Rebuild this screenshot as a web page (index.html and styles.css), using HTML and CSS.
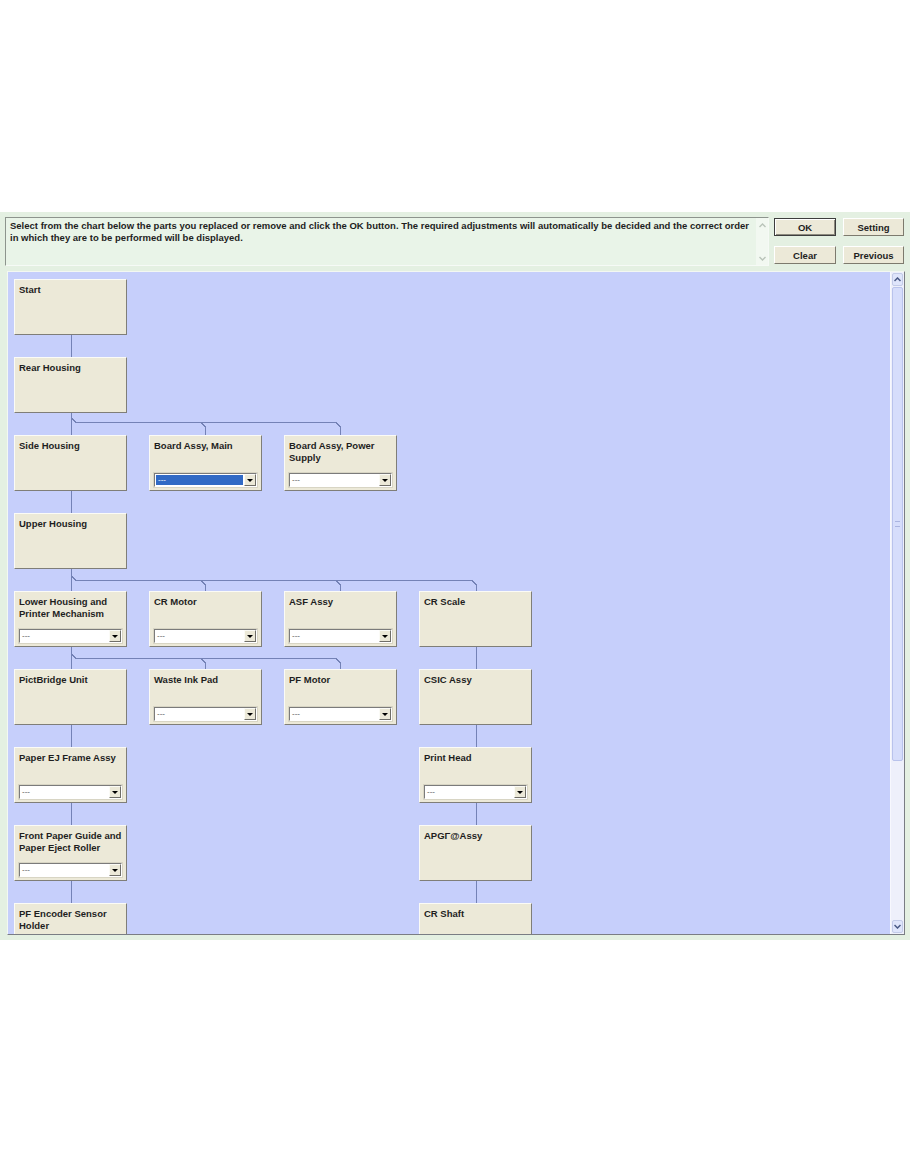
FILE: index.html
```html
<!DOCTYPE html>
<html>
<head>
<meta charset="utf-8">
<title>Adjustment order</title>
<link rel="stylesheet" href="styles.css">
</head>
<body>
<div class="app">
  <div class="toolbar">
    <div class="message">
      <p class="message-text">Select from the chart below the parts you replaced or remove and click the OK button. The required adjustments will automatically be decided and the correct order in which they are to be performed will be displayed.</p>
      <div class="msg-scroll">
        <span class="msg-arrow"><svg width="7" height="5" viewBox="0 0 7 5"><path d="M0.5 4 L3.5 1 L6.5 4" fill="none" stroke="#b9c4b9" stroke-width="1.4"/></svg></span>
        <span class="msg-arrow"><svg width="7" height="5" viewBox="0 0 7 5"><path d="M0.5 1 L3.5 4 L6.5 1" fill="none" stroke="#b9c4b9" stroke-width="1.4"/></svg></span>
      </div>
    </div>
    <div class="buttons">
      <button class="btn btn-default">OK</button>
      <button class="btn">Setting</button>
      <button class="btn">Clear</button>
      <button class="btn">Previous</button>
    </div>
  </div>

  <div class="chart">
    <div class="viewport">
      <div class="diagram">
        <svg class="links" width="600" height="700" viewBox="0 0 600 700">
          <g fill="none" stroke="#7482b6" stroke-width="1">
            <path d="M57.5 56 V78 M57.5 134 V156 M57.5 212 V234 M57.5 290 V312 M57.5 368 V390 M57.5 446 V468 M57.5 524 V546 M57.5 602 V624"/>
            <path d="M57.5 139 L62 143.5 H322 L326.5 148 V156 M187 143.5 L191.5 148 V156"/>
            <path d="M57.5 297 L62 301.5 H458 L462.5 306 V312 M187 301.5 L191.5 306 V312 M322 301.5 L326.5 306 V312"/>
            <path d="M57.5 375 L62 379.5 H322 L326.5 384 V390 M187 379.5 L191.5 384 V390"/>
            <path d="M462.5 368 V390 M462.5 446 V468 M462.5 524 V546 M462.5 602 V624"/>
          </g>
        </svg>

        <div class="node col-1 row-1"><span class="node-title">Start</span></div>
        <div class="node col-1 row-2"><span class="node-title">Rear Housing</span></div>

        <div class="node col-1 row-3"><span class="node-title">Side Housing</span></div>
        <div class="node col-2 row-3"><span class="node-title">Board Assy, Main</span>
          <div class="combo combo-active"><span class="combo-value">---</span><span class="combo-btn"></span></div></div>
        <div class="node col-3 row-3"><span class="node-title">Board Assy, Power Supply</span>
          <div class="combo"><span class="combo-value">---</span><span class="combo-btn"></span></div></div>

        <div class="node col-1 row-4"><span class="node-title">Upper Housing</span></div>

        <div class="node col-1 row-5"><span class="node-title">Lower Housing and Printer Mechanism</span>
          <div class="combo"><span class="combo-value">---</span><span class="combo-btn"></span></div></div>
        <div class="node col-2 row-5"><span class="node-title">CR Motor</span>
          <div class="combo"><span class="combo-value">---</span><span class="combo-btn"></span></div></div>
        <div class="node col-3 row-5"><span class="node-title">ASF Assy</span>
          <div class="combo"><span class="combo-value">---</span><span class="combo-btn"></span></div></div>
        <div class="node col-4 row-5"><span class="node-title">CR Scale</span></div>

        <div class="node col-1 row-6"><span class="node-title">PictBridge Unit</span></div>
        <div class="node col-2 row-6"><span class="node-title">Waste Ink Pad</span>
          <div class="combo"><span class="combo-value">---</span><span class="combo-btn"></span></div></div>
        <div class="node col-3 row-6"><span class="node-title">PF Motor</span>
          <div class="combo"><span class="combo-value">---</span><span class="combo-btn"></span></div></div>
        <div class="node col-4 row-6"><span class="node-title">CSIC Assy</span></div>

        <div class="node col-1 row-7"><span class="node-title">Paper EJ Frame Assy</span>
          <div class="combo"><span class="combo-value">---</span><span class="combo-btn"></span></div></div>
        <div class="node col-4 row-7"><span class="node-title">Print Head</span>
          <div class="combo"><span class="combo-value">---</span><span class="combo-btn"></span></div></div>

        <div class="node col-1 row-8"><span class="node-title">Front Paper Guide and Paper Eject Roller</span>
          <div class="combo"><span class="combo-value">---</span><span class="combo-btn"></span></div></div>
        <div class="node col-4 row-8"><span class="node-title">APGΓ@Assy</span></div>

        <div class="node col-1 row-9"><span class="node-title">PF Encoder Sensor Holder</span></div>
        <div class="node col-4 row-9"><span class="node-title">CR Shaft</span></div>
      </div>
    </div>
    <div class="vscroll">
      <span class="sb-btn"><svg width="7" height="5" viewBox="0 0 7 5"><path d="M0.5 4 L3.5 1 L6.5 4" fill="none" stroke="#4a5a86" stroke-width="1.5"/></svg></span>
      <div class="sb-track"><div class="sb-thumb"><span class="sb-grip"></span></div></div>
      <span class="sb-btn"><svg width="7" height="5" viewBox="0 0 7 5"><path d="M0.5 1 L3.5 4 L6.5 1" fill="none" stroke="#4a5a86" stroke-width="1.5"/></svg></span>
    </div>
  </div>
</div>
</body>
</html>
```

FILE: styles.css
```css
* { box-sizing: border-box; }

html, body {
  margin: 0;
  padding: 0;
  background: #ffffff;
}

body {
  font-family: "Liberation Sans", Arial, sans-serif;
  font-size: 9.5px;
  font-weight: bold;
  color: #1e1e1e;
}

.app {
  margin-top: 212px;
  width: 910px;
  height: 728px;
  background: #e4f0e2;
  padding: 5px 0 0 5px;
}

/* ---------- top toolbar ---------- */
.toolbar {
  display: flex;
  height: 49px;
  gap: 5px;
}

.message {
  width: 764px;
  height: 49px;
  display: flex;
  background: #e9f4e8;
  border: 1px solid;
  border-color: #8d948d #f6faf6 #f6faf6 #8d948d;
}

.message-text {
  flex: 1;
  margin: 0;
  padding: 2px 4px 0 4px;
  line-height: 12px;
}

.msg-scroll {
  width: 12px;
  display: flex;
  flex-direction: column;
  justify-content: space-between;
  background: #f2f8f1;
  padding: 1px 0;
}

.msg-arrow {
  height: 12px;
  display: flex;
  align-items: center;
  justify-content: center;
}

.buttons {
  display: grid;
  grid-template-columns: 62px 61px;
  grid-auto-rows: 18px;
  column-gap: 7px;
  row-gap: 10px;
  padding-top: 1px;
}

.btn {
  font: inherit;
  color: #1e1e1e;
  background: #ece9d8;
  border: 1px solid;
  border-color: #ffffff #7d7a6e #7d7a6e #ffffff;
  padding: 0;
  margin: 0;
}

.btn-default {
  border: 1px solid #3d3d3d;
  box-shadow: inset 1px 1px 0 #ffffff, inset -1px -1px 0 #8c8a7e;
}

/* ---------- chart ---------- */
.chart {
  margin: 5px 0 0 2px;
  width: 898px;
  height: 664px;
  display: flex;
  background: #c6cffb;
  border: 1px solid;
  border-color: #f3f8f2 #7a7d84 #7a7d84 #f3f8f2;
}

.viewport {
  flex: 1;
  overflow: hidden;
  padding: 7px 0 0 6px;
}

.diagram {
  position: relative;
  display: grid;
  grid-template-columns: repeat(4, 113px);
  grid-auto-rows: 56px;
  column-gap: 22px;
  row-gap: 22px;
}

.links {
  position: absolute;
  left: 0;
  top: 0;
  shape-rendering: crispEdges;
}

.node {
  position: relative;
  background: #ece9d8;
  border: 1px solid;
  border-color: #fbfbf6 #7f7e78 #7f7e78 #fbfbf6;
  padding: 4px 4px 0 4px;
  line-height: 11.5px;
}

.node-title {
  display: block;
}

.col-1 { grid-column: 1; }
.col-2 { grid-column: 2; }
.col-3 { grid-column: 3; }
.col-4 { grid-column: 4; }
.row-1 { grid-row: 1; }
.row-2 { grid-row: 2; }
.row-3 { grid-row: 3; }
.row-4 { grid-row: 4; }
.row-5 { grid-row: 5; }
.row-6 { grid-row: 6; }
.row-7 { grid-row: 7; }
.row-8 { grid-row: 8; }
.row-9 { grid-row: 9; }

.combo {
  position: absolute;
  left: 4px;
  top: 37px;
  width: 103px;
  height: 14px;
  display: flex;
  background: #ffffff;
  border: 1px solid;
  border-color: #7b7b7b #ffffff #ffffff #7b7b7b;
  box-shadow: 0 0 0 1px #d8d5c4;
}

.combo-value {
  flex: 1;
  font-size: 8px;
  font-weight: normal;
  line-height: 12px;
  padding-left: 2px;
  color: #555555;
}

.combo-active .combo-value {
  background: #316ac5;
  color: #ffffff;
  margin: 1px 1px 1px 1px;
  line-height: 10px;
}

.combo-btn {
  width: 12px;
  background: #ece9d8;
  border: 1px solid;
  border-color: #fbfbf6 #6f6e68 #6f6e68 #fbfbf6;
  display: flex;
  align-items: center;
  justify-content: center;
}

.combo-btn::after {
  content: "";
  border-left: 3px solid transparent;
  border-right: 3px solid transparent;
  border-top: 3px solid #000000;
}

/* ---------- chart scrollbar ---------- */
.vscroll {
  width: 14px;
  display: flex;
  flex-direction: column;
  background: #eef0fb;
  border-left: 1px solid #f7f8fe;
}

.sb-btn {
  height: 13px;
  display: flex;
  align-items: center;
  justify-content: center;
  background: #dfe5fb;
  border: 1px solid #c3cbe8;
  border-radius: 2px;
  margin: 1px 1px 0 1px;
}

.sb-btn:last-child {
  margin: 0 1px 1px 1px;
}

.sb-track {
  flex: 1;
  padding: 1px 1px 0 1px;
  display: flex;
  flex-direction: column;
}

.sb-thumb {
  height: 474px;
  background: #d6ddfb;
  border: 1px solid #b9c3ec;
  border-radius: 2px;
  display: flex;
  align-items: center;
  justify-content: center;
}

.sb-grip {
  width: 5px;
  height: 6px;
  border-top: 1px solid #aab4e0;
  border-bottom: 1px solid #aab4e0;
}
```
